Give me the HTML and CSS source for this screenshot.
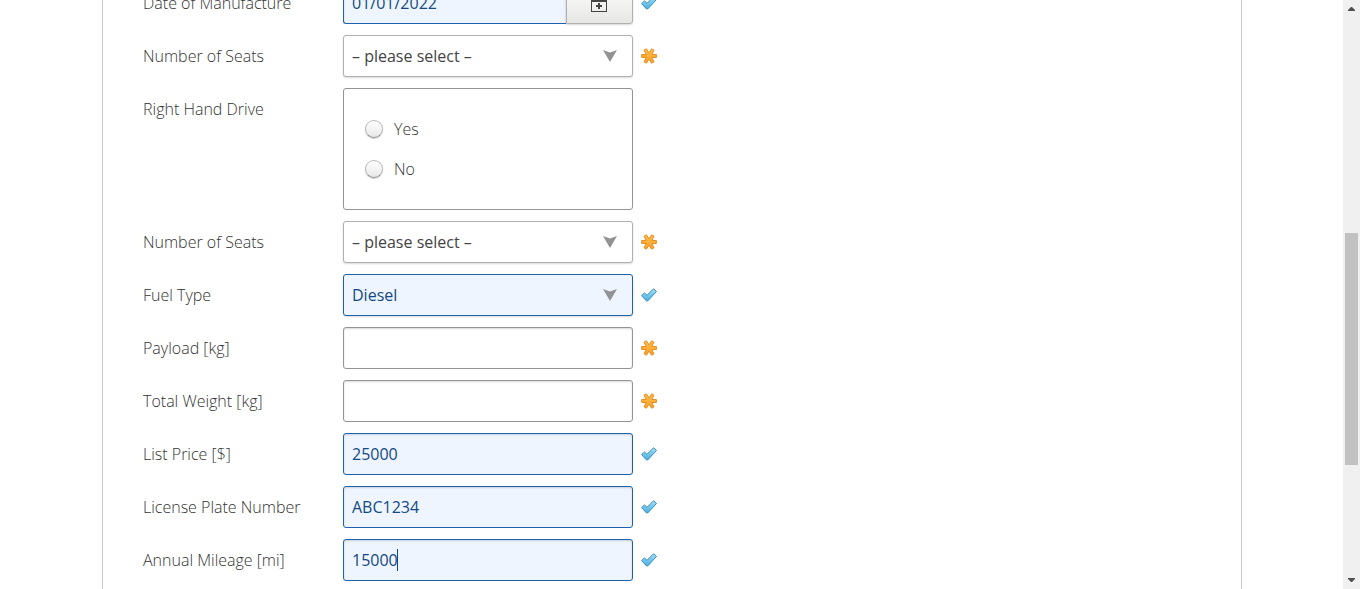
FILE: index.html
```html
<!DOCTYPE html>
<html lang="en">
<head>
<meta charset="utf-8">
<title>Vehicle Data</title>
<link rel="stylesheet" href="styles.css">
</head>
<body>
<svg class="defs" aria-hidden="true">
  <defs>
    <linearGradient id="blue" x1="0" y1="0" x2="0" y2="1"><stop offset="0" stop-color="#a5e0f6"/><stop offset="1" stop-color="#48aee2"/></linearGradient>
    <linearGradient id="orange" x1="0" y1="0" x2="0" y2="1"><stop offset="0" stop-color="#ffc04c"/><stop offset="1" stop-color="#ffa026"/></linearGradient>
    <symbol id="ok" viewBox="0 0 16 14"><path d="M0.6 7.6L3.4 4.9L6 7.3L12.6 0.7L15.5 3.4L6.8 12.9H5.4Z" fill="url(#blue)" stroke="#3c8fbd" stroke-linejoin="round"/></symbol>
    <symbol id="required" viewBox="0 0 16 16"><path d="M0.6 6.6L5.2 6.4L3 2.2L5.4 0.8L8 4.8L10.6 0.8L13 2.2L10.8 6.4L15.4 6.6V9.4L10.8 9.6L13 13.8L10.6 15.2L8 11.2L5.4 15.2L3 13.8L5.2 9.6L0.6 9.4Z" fill="url(#orange)" stroke="#e58d25" stroke-linejoin="round"/></symbol>
    <symbol id="arrow" viewBox="0 0 14 12"><path d="M0 0L7 2.6L14 0L7 12Z" fill="#929292"/></symbol>
  </defs>
</svg>
<main class="page">
  <form class="panel">
    <div class="row">
      <label class="label" for="date">Date of Manufacture</label>
      <div class="control date"><input class="field filled" id="date" type="text" value="01/01/2022"><button class="picker" type="button" aria-label="Open calendar"><svg class="calendar" viewBox="0 0 16 16"><path d="M0 1H16V16H0ZM1 6V15H15V6Z" fill="#444" fill-rule="evenodd"/><path d="M5 10H11M8 7V13" stroke="#444" stroke-width="2"/></svg></button></div>
      <svg class="mark check"><use href="#ok"/></svg>
    </div>
    <div class="row">
      <label class="label" for="seats">Number of Seats</label>
      <div class="control"><select class="field choice" id="seats"><option>– please select –</option></select><svg class="arrow"><use href="#arrow"/></svg></div>
      <svg class="mark star"><use href="#required"/></svg>
    </div>
    <div class="row">
      <span class="label" id="drive">Right Hand Drive</span>
      <div class="control options" role="radiogroup" aria-labelledby="drive">
        <label class="option"><input class="radio" type="radio" name="drive">Yes</label>
        <label class="option"><input class="radio" type="radio" name="drive">No</label>
      </div>
    </div>
    <div class="row">
      <label class="label" for="seats2">Number of Seats</label>
      <div class="control"><select class="field choice" id="seats2"><option>– please select –</option></select><svg class="arrow"><use href="#arrow"/></svg></div>
      <svg class="mark star"><use href="#required"/></svg>
    </div>
    <div class="row">
      <label class="label" for="fuel">Fuel Type</label>
      <div class="control"><select class="field choice filled" id="fuel"><option>Diesel</option></select><svg class="arrow"><use href="#arrow"/></svg></div>
      <svg class="mark check"><use href="#ok"/></svg>
    </div>
    <div class="row">
      <label class="label" for="payload">Payload [kg]</label>
      <div class="control"><input class="field" id="payload" type="text"></div>
      <svg class="mark star"><use href="#required"/></svg>
    </div>
    <div class="row">
      <label class="label" for="weight">Total Weight [kg]</label>
      <div class="control"><input class="field" id="weight" type="text"></div>
      <svg class="mark star"><use href="#required"/></svg>
    </div>
    <div class="row">
      <label class="label" for="price">List Price [$]</label>
      <div class="control"><input class="field filled" id="price" type="text" value="25000"></div>
      <svg class="mark check"><use href="#ok"/></svg>
    </div>
    <div class="row">
      <label class="label" for="plate">License Plate Number</label>
      <div class="control"><input class="field filled" id="plate" type="text" value="ABC1234"></div>
      <svg class="mark check"><use href="#ok"/></svg>
    </div>
    <div class="row">
      <label class="label" for="mileage">Annual Mileage [mi]</label>
      <div class="control"><input class="field filled" id="mileage" type="text" value="15000"><span class="caret"></span></div>
      <svg class="mark check"><use href="#ok"/></svg>
    </div>
  </form>
</main>
<div class="scrollbar" aria-hidden="true">
  <svg class="step" viewBox="0 0 7 4"><path d="M0 4V3L3 0H4L7 3V4Z" fill="#505050"/></svg>
  <div class="track"><div class="thumb"></div></div>
  <svg class="step" viewBox="0 0 7 4"><path d="M0 0V1L3 4H4L7 1V0Z" fill="#505050"/></svg>
</div>
</body>
</html>
```

FILE: styles.css
```css
* { box-sizing: border-box; }

body {
  display: flex;
  height: 100vh;
  margin: 0;
  overflow: hidden;
  background: #fff;
  color: #333;
  font: 300 16px/24px "Open Sans", sans-serif;
}

.defs { position: absolute; width: 0; height: 0; }

.page {
  flex: 1;
  padding: 0 101px 0 102px;
  overflow: hidden;
}

/* The form is scrolled part-way through its first row. */
.panel {
  display: flex;
  flex-direction: column;
  gap: 11px;
  margin-top: -18px;
  padding: 0 40px 20px;
  border: solid #c8c8c8;
  border-width: 0 1px;
}

.row {
  display: grid;
  grid-template-columns: 200px 290px 24px;
  align-items: center;
}

.label { align-self: start; padding: 9px 0; }

.control { position: relative; display: flex; }

.field {
  flex: 1;
  min-width: 0;
  height: 42px;
  margin: 0;
  padding: 0 8px;
  border: 1px solid #949494;
  border-radius: 3px;
  outline: 0;
  background: #fff;
  box-shadow: inset 0 1px 2px #00000026;
  color: #444;
  font: 400 16px/24px "Open Sans", sans-serif;
}

.choice {
  appearance: none;
  border-color: #b0b0b0;
  box-shadow: 0 1px 2px #00000026;
}

.filled {
  border-color: #1e62ae;
  background: #eef5fe;
  color: #134a85;
}

.arrow {
  position: absolute;
  top: 15px;
  right: 16px;
  width: 14px;
  height: 12px;
  pointer-events: none;
}

.date .field { border-radius: 3px 0 0 3px; border-right: 0; }

.picker {
  display: flex;
  align-items: flex-end;
  justify-content: center;
  width: 67px;
  padding: 0 2px 11px 0;
  border: 1px solid #b0b0b0;
  border-radius: 0 3px 3px 0;
  background: linear-gradient(#fff, #e6e6e4);
  box-shadow: 0 1px 2px #00000026;
}

.calendar { flex: none; width: 16px; height: 16px; }

.options {
  flex-direction: column;
  gap: 16px;
  height: 122px;
  padding: 28px 21px;
  border: 1px solid #949494;
  border-radius: 3px;
}

.option { display: flex; align-items: center; gap: 11px; }

.radio {
  appearance: none;
  width: 18px;
  height: 18px;
  margin: 0;
  border: 1px solid #b8b8b8;
  border-bottom-color: #909090;
  border-radius: 50%;
  background: linear-gradient(#fff, #e8e8e8);
  box-shadow: 0 1px 1px #00000033;
}

.mark { margin-left: 8px; }
.check { width: 16px; height: 14px; }
.star { width: 16px; height: 16px; }

.caret {
  position: absolute;
  top: 10px;
  left: 54px;
  width: 1px;
  height: 22px;
  background: #134a85;
}

.scrollbar {
  display: flex;
  flex-direction: column;
  align-items: center;
  width: 17px;
  padding: 7px 2px;
  background: #f0f0f0;
}

.step { width: 7px; height: 4px; }

.track {
  flex: 1;
  align-self: stretch;
  padding-top: 222px;
}

.thumb { height: 232px; background: #c1c1c1; }
```
